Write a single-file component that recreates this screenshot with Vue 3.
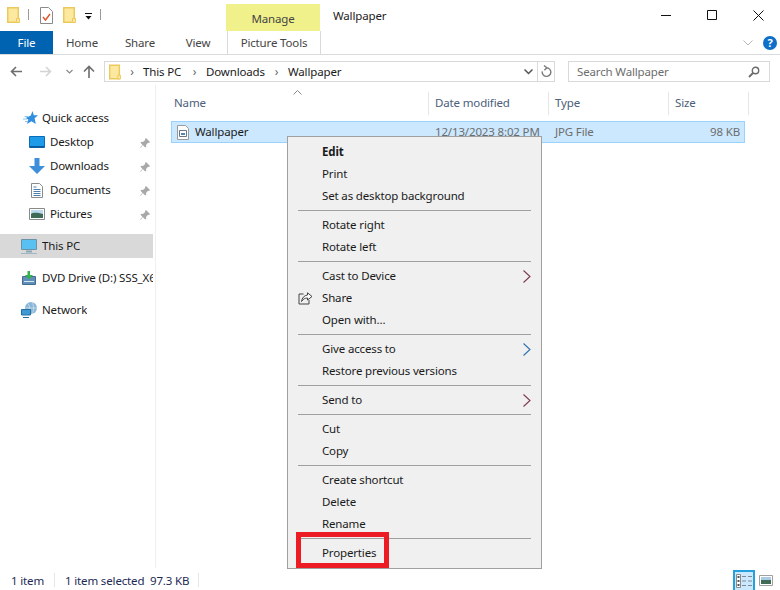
<script setup>
const tabs = ['Home', 'Share', 'View']
const nav = [
  { group: 1, rows: [
    { t: 'Quick access', i: 'star', top: true },
    { t: 'Desktop', i: 'desktop', pin: true },
    { t: 'Downloads', i: 'down', pin: true },
    { t: 'Documents', i: 'doc', pin: true },
    { t: 'Pictures', i: 'pic', pin: true }
  ] },
  { group: 2, rows: [{ t: 'This PC', i: 'pc', top: true, sel: true }] },
  { group: 3, rows: [{ t: 'DVD Drive (D:) SSS_X64', i: 'dvd', top: true }] },
  { group: 4, rows: [{ t: 'Network', i: 'net', top: true }] }
]
const menu = [
  { t: 'Edit', b: true }, { t: 'Print' }, { t: 'Set as desktop background' }, { s: 1 },
  { t: 'Rotate right' }, { t: 'Rotate left' }, { s: 1 },
  { t: 'Cast to Device', a: '#7d3b4c' }, { t: 'Share', share: true }, { t: 'Open with...' }, { s: 1 },
  { t: 'Give access to', a: '#2f6fb0' }, { t: 'Restore previous versions' }, { s: 1 },
  { t: 'Send to', a: '#7d3b4c' }, { s: 1 },
  { t: 'Cut' }, { t: 'Copy' }, { s: 1 },
  { t: 'Create shortcut' }, { t: 'Delete' }, { t: 'Rename' }, { s: 1 },
  { t: 'Properties' }
]
</script>

<template>
  <div class="win">
    <header class="title">
      <div class="qat">
        <svg class="ic-folder" width="13" height="16" viewBox="0 0 13 16"><path d="M.75.75h10.500v14.500H.75z" fill="#fde89f" stroke="#ecc95c" stroke-width="1.500"/><path d="M9.500 11.500h3v4h-3z" fill="#fde89f" stroke="#ecc95c"/></svg>
        <i class="qsep"></i>
        <svg class="ic-check" width="13" height="17" viewBox="0 0 13 17"><path d="M.5.500h8l4 4v12H.5z" fill="#fff" stroke="#8a8a8a"/><path d="M3 10l2.500 3L10 7" fill="none" stroke="#e0562a" stroke-width="1.400"/></svg>
        <svg class="ic-folder2" width="13" height="16" viewBox="0 0 13 16"><path d="M.75.75h10.500v14.500H.75z" fill="#fde89f" stroke="#ecc95c" stroke-width="1.500"/><path d="M9.500 11.500h3v4h-3z" fill="#fde89f" stroke="#ecc95c"/></svg>
        <svg class="ic-drop" width="7" height="7" viewBox="0 0 7 7"><path d="M0 .5h7" stroke="#111"/><path d="M.5 3h6L3.500 6.500z" fill="#111"/></svg>
        <i class="qsep qsep2"></i>
      </div>
      <div class="manage">Manage</div>
      <div class="wintitle">Wallpaper</div>
      <div class="controls">
        <svg width="11" height="11" viewBox="0 0 11 11"><path d="M0 5.500h10" stroke="#111"/></svg>
        <svg width="11" height="11" viewBox="0 0 11 11"><path d="M.5.500h9v9h-9z" fill="none" stroke="#111"/></svg>
        <svg width="11" height="11" viewBox="0 0 11 11"><path d="M.5.500l10 10M10.500.5l-10 10" stroke="#111" fill="none"/></svg>
      </div>
    </header>

    <nav class="ribbon">
      <div class="file">File</div>
      <div v-for="t in tabs" :key="t" class="tab">{{ t }}</div>
      <div class="tools">Picture Tools</div>
      <div class="ribbon-end">
        <svg width="10" height="6" viewBox="0 0 10 6"><path d="M.5.500L5 5 9.500.5" fill="none" stroke="#b5b5b5"/></svg>
        <div class="help">?</div>
      </div>
    </nav>

    <div class="addr">
      <svg class="b-back" width="12" height="11" viewBox="0 0 12 11"><path d="M12 5.500H2M6 1L1.500 5.500 6 10" fill="none" stroke="#6e6e6e" stroke-width="1.600"/></svg>
      <svg class="b-fwd" width="12" height="11" viewBox="0 0 12 11"><path d="M0 5.500h10M6 1l4.500 4.500L6 10" fill="none" stroke="#d4d4d4" stroke-width="1.600"/></svg>
      <svg class="b-hist" width="7" height="5" viewBox="0 0 7 5"><path d="M.5 1L3.500 4 6.500 1" fill="none" stroke="#8a8a8a" stroke-width="1.200"/></svg>
      <svg class="b-up" width="12" height="13" viewBox="0 0 12 13"><path d="M6 13V2M1 6.500L6 1.500l5 5" fill="none" stroke="#6e6e6e" stroke-width="1.600"/></svg>
      <div class="path">
        <svg class="path-folder" width="12" height="16" viewBox="0 0 13 16"><path d="M.75.75h10.500v14.500H.75z" fill="#fde89f" stroke="#ecc95c" stroke-width="1.500"/><path d="M9.500 11.500h3v4h-3z" fill="#fde89f" stroke="#ecc95c"/></svg>
        <span class="crumb-arrow first">›</span><span class="c1">This PC</span>
        <span class="crumb-arrow">›</span><span class="c2">Downloads</span>
        <span class="crumb-arrow">›</span><span>Wallpaper</span>
        <svg class="path-drop" width="9" height="6" viewBox="0 0 9 6"><path d="M.5.500l4 4 4-4" fill="none" stroke="#555" stroke-width="1.500"/></svg>
        <div class="refresh">
          <svg width="11" height="13" viewBox="0 0 11 13"><path d="M5.500 2.800a4.300 4.300 0 1 1-4.200 3.500M3 .5l2.800 2.300L3.400 5.200" fill="none" stroke="#7a7a7a" stroke-width="1.400"/></svg>
        </div>
      </div>
      <div class="search">
        <span>Search Wallpaper</span>
        <svg width="12" height="12" viewBox="0 0 12 12"><circle cx="7.500" cy="4.500" r="3.200" fill="none" stroke="#6a6a6a" stroke-width="1.400"/><path d="M5 7l-4 4" stroke="#6a6a6a" stroke-width="1.800"/></svg>
      </div>
    </div>

    <div class="main">
      <aside class="nav">
        <div v-for="g in nav" :key="g.group" class="group">
          <div v-for="r in g.rows" :key="r.t" class="nrow" :class="{ top: r.top, sel: r.sel }">
            <span class="nicon">
              <svg v-if="r.i === 'star'" class="shift2" width="15" height="14" viewBox="0 0 15 14"><path d="M9.500 0l1.300 4.300H15l-3.400 3 1.200 5.700-4.300-2.800L4 13l1.300-4.500L2.600 7 7.800 4.600z" fill="#2f8fe0"/><path d="M0 8h4M1.500 5.500H5M2 10.500h3" stroke="#8cc4ee"/></svg>
              <svg v-else-if="r.i === 'desktop'" width="16" height="12" viewBox="0 0 16 12"><path d="M.5.500h15v11H.5z" fill="#1e9be8" stroke="#0a6cb8"/><path d="M1 10h14v1.500H1z" fill="#0a5a9a"/></svg>
              <svg v-else-if="r.i === 'down'" width="16" height="16" viewBox="0 0 16 16"><path d="M5.500 0h5v8H16l-8 8-8-8h5.500z" fill="#3d8fd9"/></svg>
              <svg v-else-if="r.i === 'doc'" class="shift2" width="12" height="15" viewBox="0 0 12 15"><path d="M.5.500h8l3 3v11H.5z" fill="#fff" stroke="#8a8a8a"/><path d="M2.500 4h3M2.500 6.500h7M2.500 8.500h7M2.500 10.500h7M2.500 12.500h7" stroke="#4a7fae"/></svg>
              <svg v-else-if="r.i === 'pic'" width="16" height="12" viewBox="0 0 16 12"><path d="M.5.500h15v11H.5z" fill="#fff" stroke="#8a8a8a"/><path d="M2 2h12v4H2z" fill="#bcd9ee"/><path d="M2 6c3-2 7-1 12 0v4H2z" fill="#3f6a55"/></svg>
              <svg v-else-if="r.i === 'pc'" width="16" height="15" viewBox="0 0 16 15"><path d="M.5.500h15v10H.5z" fill="#59c0f2" stroke="#6b93a8"/><path d="M5 12.500h6" stroke="#8ba6b5" stroke-width="2"/><path d="M0 14.500h16" stroke="#9fb6c4"/></svg>
              <svg v-else-if="r.i === 'dvd'" class="shift1" width="15" height="14" viewBox="0 0 15 14"><path d="M.5 5.500h13v8H.5z" fill="#5f8fb8" stroke="#466d8f"/><path d="M2 10.500h10" stroke="#d8e6f0"/><path d="M8 0v4h3L7 8.500 3 4h2.500V0z" fill="#34b24a"/></svg>
              <svg v-else-if="r.i === 'net'" width="16" height="16" viewBox="0 0 16 16"><circle cx="10" cy="6" r="6" fill="#8ab6d8"/><path d="M7 1.500c2 2 2 7 0 9M11 0c2 3 2 9 0 12M4.500 6H16" stroke="#d6e6f2" fill="none" stroke-width=".7"/><path d="M.5 7.500h9v5.500h-9z" fill="#3d9ad6" stroke="#26709f"/><path d="M2 15.500h6" stroke="#26709f"/></svg>
            </span>
            <span class="nlabel">{{ r.t }}</span>
            <svg v-if="r.pin" class="pin" width="10" height="10" viewBox="0 0 10 10"><path d="M6 0l4 4-1 1-1-.2L6 7l.3 1.500-1 1L3 7.200 .5 9.800 0 9.500 2.600 7 .5 4.700l1-1L3 4l2.200-2L5 1z" fill="#a8a8a8"/></svg>
          </div>
        </div>
      </aside>

      <section class="content">
        <div class="cols">
          <div class="col col-name"><span>Name</span><svg class="sort" width="9" height="5" viewBox="0 0 9 5"><path d="M.5 4.500l4-4 4 4" fill="none" stroke="#8a8a8a"/></svg></div>
          <div class="col"><span>Date modified</span></div>
          <div class="col"><span>Type</span></div>
          <div class="col col-size"><span>Size</span></div>
        </div>
        <div class="file-row">
          <div class="cell-name">
            <svg width="12" height="15" viewBox="0 0 12 15"><path d="M.5.500h8l3 3v11H.5z" fill="#fdfdfd" stroke="#9a9a9a"/><path d="M2.500 5.500h7v6h-7z" fill="#fff" stroke="#6c7680"/><path d="M4 8h4v2H4z" fill="#4f86b5"/></svg>
            <span>Wallpaper</span>
          </div>
          <div class="cell-date">12/13/2023 8:02 PM</div>
          <div class="cell-type">JPG File</div>
          <div class="cell-size">98 KB</div>
        </div>
      </section>
    </div>

    <footer class="status">
      <span class="st1">1 item</span>
      <i class="stsep"></i>
      <span class="st2">1 item selected</span>
      <span class="st3">97.3 KB</span>
      <i class="stsep"></i>
      <div class="views">
        <div class="view-on">
          <svg width="16" height="14" viewBox="0 0 16 14"><path d="M.5.500h4v13h-4z" fill="#fff" stroke="#8a8a8a"/><path d="M1.500 2h2v2h-2zM1.500 6h2v2h-2zM1.500 10h2v2h-2z" fill="#555"/><path d="M6 2.500h4M12 2.500h4M6 7h4M12 7h4M6 11.500h4M12 11.500h4" stroke="#7d8a94" stroke-width="1.200"/></svg>
        </div>
        <svg width="14" height="11" viewBox="0 0 14 11"><path d="M.5.500h13v10H.5z" fill="#fff" stroke="#a0a0a0"/><path d="M2 2h10v3H2z" fill="#a9cbe6"/><path d="M2 5h10v4H2z" fill="#3f6a55"/></svg>
      </div>
    </footer>

    <div class="menu">
      <template v-for="(m, i) in menu" :key="i">
        <div v-if="m.s" class="msep"></div>
        <div v-else class="mitem" :class="{ bold: m.b }">
          <svg v-if="m.share" class="mshare" width="15" height="13" viewBox="0 0 15 13"><path d="M5.500 2H1v10h10V8" fill="none" stroke="#444"/><path d="M9.500.8L14 4.500 9.500 8V6C7 6 5 7 3.500 9.500 4 6 6 3.500 9.500 3z" fill="#fff" stroke="#444"/></svg>
          <span class="mlabel">{{ m.t }}</span>
          <svg v-if="m.a" class="marrow" width="8" height="13" viewBox="0 0 8 13"><path d="M.5.500l6.500 6-6.500 6" fill="none" :stroke="m.a" stroke-width="1.100"/></svg>
        </div>
      </template>
    </div>
    <div class="redbox"></div>
  </div>
</template>

<style>
html, body { margin: 0; background: #fff; }
</style>

<style scoped>
.win {
  position: relative;
  width: 780px;
  height: 590px;
  overflow: hidden;
  display: flex;
  flex-direction: column;
  background: #fff;
  font: 11.5px "Noto Sans", "Open Sans", sans-serif;
  letter-spacing: -0.15px;
  color: #1a1a1a;
}
.title { height: 31px; display: flex; flex: none; }
.qat { width: 226px; display: flex; align-items: flex-start; padding-top: 7px; box-sizing: border-box; }
.ic-folder { margin-left: 7px; }
.qsep { width: 1px; height: 11px; background: #9a9a9a; margin: 2px 0 0 8px; }
.ic-check { margin-left: 11px; }
.ic-folder2 { margin-left: 10px; }
.ic-drop { margin: 6px 0 0 9px; }
.qsep2 { margin-left: 8px; }
.manage {
  width: 94px; margin-top: 4px; background: #f1f18c; color: #444;
  display: flex; align-items: center; justify-content: center; padding-top: 1px; box-sizing: border-box;
}
.wintitle { margin: 8px 0 0 13px; line-height: 16px; color: #222; }
.controls { margin-left: auto; width: 103px; margin-right: 16px; display: flex; gap: 35px; padding-top: 10px; box-sizing: border-box; height: 21px; }

.ribbon { height: 24px; flex: none; display: flex; border-bottom: 1px solid #dadbdc; box-sizing: border-box; }
.file { width: 53px; height: 23px; background: #0063b1; color: #fff; display: flex; align-items: center; justify-content: center; }
.tab { width: 58px; display: flex; align-items: center; justify-content: center; color: #444; }
.tab:last-of-type { width: 57px; }
.tools {
  width: 94px; box-sizing: border-box; height: 23px;
  border-left: 1px solid #d9d9d9; border-right: 1px solid #d9d9d9;
  display: flex; align-items: center; justify-content: center; color: #444;
}
.ribbon-end { margin-left: auto; display: flex; align-items: center; gap: 10px; padding-right: 3px; }
.help {
  width: 14px; height: 14px; border-radius: 50%; background: #0d6fc9; color: #fff;
  font: bold 11px/14px "Noto Sans", sans-serif; text-align: center;
}

.addr { height: 30px; flex: none; display: flex; align-items: center; padding-top: 3px; box-sizing: border-box; }
.b-back { margin-left: 10px; }
.b-fwd { margin-left: 18px; }
.b-hist { margin-left: 14px; }
.b-up { margin-left: 10px; }
.path {
  margin-left: 9px; width: 451px; height: 21px; border: 1px solid #d9d9d9; box-sizing: border-box;
  display: flex; align-items: center;
}
.path-folder { margin-left: 4px; flex: none; }
.crumb-arrow { width: 23px; text-align: center; color: #666; font-size: 12px; }
.crumb-arrow.first { width: 22px; }
.c1 { width: 40px; white-space: nowrap; }
.c2 { width: 59px; white-space: nowrap; }
.path-drop { margin-left: auto; margin-right: 4px; }
.refresh { width: 16px; height: 19px; border-left: 1px solid #d9d9d9; display: flex; align-items: center; justify-content: center; }
.search {
  margin-left: 13px; width: 202px; height: 21px; border: 1px solid #d9d9d9; box-sizing: border-box;
  display: flex; align-items: center; justify-content: space-between; padding: 0 9px 0 8px; color: #6d6d6d;
}

.main { flex: 1; display: flex; min-height: 0; }
.nav { width: 156px; flex: none; box-sizing: border-box; padding-top: 21px; border-right: 1px solid #f0f0f0; display: flex; flex-direction: column; gap: 8px; }
.nrow { width: 153px; height: 24px; display: flex; align-items: center; position: relative; padding-left: 29px; box-sizing: border-box; white-space: nowrap; overflow: hidden; }
.nrow.top { padding-left: 21px; }
.nrow.sel { background: #d9d9d9; }
.nicon { width: 21px; flex: none; display: flex; align-items: center; }
.shift2 { margin-left: 2px; }
.shift1 { margin-left: 1px; }
.nlabel { overflow: hidden; margin-top: -2px; }
.pin { position: absolute; left: 140px; top: 8px; }

.content { flex: 1; padding-left: 12px; display: flex; flex-direction: column; }
.cols { height: 23px; margin-top: 7px; display: grid; grid-template-columns: 261px 120px 120px 80px; color: #4c607a; }
.col { border-right: 1px solid #e5e5e5; padding-left: 6px; display: flex; align-items: center; box-sizing: border-box; position: relative; }
.col span { margin-top: -2px; }
.sort { position: absolute; left: 125px; top: -2px; }
.file-row {
  width: 574px; height: 22px; margin: 6px 0 0 3px; box-sizing: border-box;
  background: #cce8ff; border: 1px solid #99d1ff;
  display: grid; grid-template-columns: 257px 120px 113px 82px; align-items: center;
}
.cell-name { display: flex; align-items: center; gap: 6px; padding-left: 5px; }
.cell-name span { margin-top: -2px; }
.cell-date, .cell-type { padding-left: 6px; color: #6d6d6d; white-space: nowrap; margin-top: -2px; }
.cell-size { text-align: right; padding-right: 4px; color: #6d6d6d; margin-top: -2px; }

.status { height: 22px; flex: none; display: flex; align-items: center; padding: 2px 0 0 11px; box-sizing: border-box; color: #1d2a55; }
.stsep { width: 1px; height: 14px; background: #e6e6e6; }
.st1 { width: 43px; }
.st2 { margin-left: 10px; width: 85px; white-space: nowrap; }
.st3 { width: 48px; white-space: nowrap; }
.views { margin-left: auto; display: flex; align-items: center; gap: 4px; padding-right: 7px; height: 100%; }
.view-on { width: 22px; height: 21px; box-sizing: border-box; background: #cce8ff; border: 2px solid #26a0da; border-bottom: 0; display: flex; align-items: center; justify-content: center; }

.menu {
  position: absolute; left: 287px; top: 136px; width: 255px; height: 433px; box-sizing: border-box;
  background: #f0f0f0; border: 1px solid #a0a0a0; padding-top: 4px; z-index: 2;
}
.mitem { height: 22px; padding-left: 34px; display: flex; align-items: center; position: relative; color: #1a1a1a; }
.mlabel { margin-top: -2px; }
.bold { font-weight: 700; }
.msep { height: 1px; margin: 3px 10px; background: #a0a0a0; }
.marrow { position: absolute; right: 10px; top: 5px; }
.mshare { position: absolute; left: 10px; top: 5px; }
.redbox { position: absolute; left: 296px; top: 532px; width: 93px; height: 36px; box-sizing: border-box; border: 5px solid #ed1c24; z-index: 3; }
</style>
